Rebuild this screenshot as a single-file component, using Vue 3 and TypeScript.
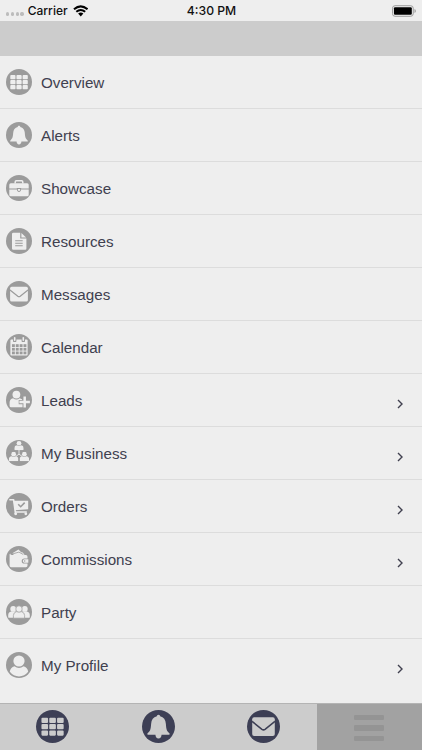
<script setup lang="ts">
interface MenuItem {
  label: string
  icon: string
  expandable?: boolean
}

const items: MenuItem[] = [
  { label: 'Overview', icon: 'grid' },
  { label: 'Alerts', icon: 'bell' },
  { label: 'Showcase', icon: 'case' },
  { label: 'Resources', icon: 'document' },
  { label: 'Messages', icon: 'mail' },
  { label: 'Calendar', icon: 'calendar' },
  { label: 'Leads', icon: 'lead', expandable: true },
  { label: 'My Business', icon: 'team', expandable: true },
  { label: 'Orders', icon: 'cart', expandable: true },
  { label: 'Commissions', icon: 'wallet', expandable: true },
  { label: 'Party', icon: 'party' },
  { label: 'My Profile', icon: 'profile', expandable: true },
]

const tabs: string[] = ['grid', 'bell', 'mail']
const offsets = [0, 1, 2]
</script>

<template>
  <svg class="sprite" aria-hidden="true">
    <symbol id="grid" viewBox="0 0 26 26">
      <circle cx="13" cy="13" r="13" fill="currentColor" />
      <template v-for="r in offsets" :key="r">
        <rect v-for="c in offsets" :key="c" :x="4.3 + c * 6.15" :y="6.1 + r * 5" width="5.2" height="4.1" rx=".8" />
      </template>
    </symbol>
    <symbol id="bell" viewBox="0 0 26 26">
      <circle cx="13" cy="13" r="13" fill="currentColor" />
      <path d="M13 3.7c.8 0 1.3.6 1.3 1.3 2.8.6 4.300 2.800 4.500 5.800.3 4.200.7 5.700 2.600 7.400.8.7.6 1.300-.3 1.300h-5.700c0 1.700-1 2.900-2.400 2.900s-2.400-1.200-2.400-2.900H4.900c-.9 0-1.100-.6-.3-1.300 1.900-1.700 2.300-3.200 2.600-7.400.2-3 1.700-5.200 4.500-5.800 0-.7.5-1.300 1.300-1.300z" />
    </symbol>
    <symbol id="case" viewBox="0 0 26 26">
      <circle cx="13" cy="13" r="13" fill="currentColor" />
      <path d="M9.200 8.500V6.900q0-1.100 1.100-1.100h5.400q1.100 0 1.100 1.100v1.600" fill="none" class="cut" stroke-width="1.500" />
      <path d="M4.800 8.200h16.400q1.500 0 1.500 1.500v3.900h-7.500v-.5h-4.400v.5H3.300V9.700q0-1.500 1.500-1.500z" />
      <path d="M3.300 14.500h7.600c.1 1.600 1 2.400 2.100 2.400s2-.8 2.100-2.400h7.600v5.200q0 1.500-1.500 1.500H4.800q-1.500 0-1.500-1.500z" />
      <path d="M11.900 14h2.200v.9q0 1-1.100 1t-1.100-1z" />
    </symbol>
    <symbol id="document" viewBox="0 0 26 26">
      <circle cx="13" cy="13" r="13" fill="currentColor" />
      <path d="M7.200 4.700h7v5.900h6.200v9.900q0 1.200-1.200 1.200h-12Q6 21.700 6 20.500V5.900q0-1.200 1.200-1.200zM15.400 4.900l4.700 4.500h-4.700z" />
      <path d="M9.200 12.700h7.500M9.200 15.200h7.500M9.200 17.700h7.500" stroke="currentColor" stroke-width="1.100" />
    </symbol>
    <symbol id="mail" viewBox="0 0 26 26">
      <circle cx="13" cy="13" r="13" fill="currentColor" />
      <rect x="4.100" y="5.700" width="17.800" height="14.800" rx="1.500" />
      <path d="M4 9l7.800 6.200q1.200.9 2.400 0L22 9" fill="none" stroke="currentColor" stroke-width="1.200" />
    </symbol>
    <symbol id="calendar" viewBox="0 0 26 26">
      <circle cx="13" cy="13" r="13" fill="currentColor" />
      <path d="M5.300 5.500h15.400q.9 0 .9.900v14.200q0 .9-.9.900H5.300q-.9 0-.9-.9V6.400q0-.9.900-.9z" />
      <g fill="currentColor">
        <rect x="7" y="3.200" width="3.400" height="4.900" rx="1.200" />
        <rect x="15.600" y="3.200" width="3.400" height="4.900" rx="1.200" />
        <template v-for="r in offsets" :key="r">
          <rect v-for="c in 4" :key="c" :x="2.1 + c * 3.85" :y="10.2 + r * 3.65" width="2.900" height="2.800" />
        </template>
      </g>
      <rect x="7.900" y="3" width="1.600" height="4.100" rx=".8" />
      <rect x="16.500" y="3" width="1.600" height="4.100" rx=".8" />
    </symbol>
    <symbol id="lead" viewBox="0 0 26 26">
      <circle cx="13" cy="13" r="13" fill="currentColor" />
      <circle cx="10.400" cy="7.600" r="3.900" />
      <path d="M7.100 11.200q3.300 2.600 6.600 0 2.900.7 3.300 3.100v5.900H5.100q-1.500 0-1.500-1.500v-3.100q0-3.800 3.500-4.400z" />
      <path d="M18.700 8.700v12.600M12.700 15.100h12" stroke="currentColor" stroke-width="4.300" />
      <path d="M18.700 9.600v10.900M13.400 15.100h10.500" class="cut" stroke-width="2.500" />
    </symbol>
    <symbol id="person" viewBox="0 0 10 10">
      <circle cx="5" cy="2.600" r="2.500" />
      <path d="M2.900 4.700q2.100 1.700 4.200 0Q10 5.100 10 7.600v1.600q0 .8-.8.8H.8q-.8 0-.8-.8V7.600q0-2.500 2.900-2.900z" />
    </symbol>
    <symbol id="team" viewBox="0 0 26 26">
      <circle cx="13" cy="13" r="13" fill="currentColor" />
      <path d="M13 10v4.200M10 16.300l3-2.200 3 2.200" fill="none" class="cut" stroke-width=".9" />
      <use href="#person" x="8.300" y=".8" width="9.400" height="9.400" />
      <use href="#person" x="2.900" y="11.700" width="9.500" height="9.500" />
      <use href="#person" x="13.600" y="11.700" width="9.500" height="9.500" />
    </symbol>
    <symbol id="cart" viewBox="0 0 26 26">
      <circle cx="13" cy="13" r="13" fill="currentColor" />
      <path d="M3.900 6.700h3.700l2 14.500" fill="none" class="cut" stroke-width="1.600" stroke-linecap="round" stroke-linejoin="round" />
      <path d="M7.500 7.700h14.700v8.500L8.800 17.200z" />
      <path d="M9 19h11.800" class="cut" stroke-width="1.500" />
      <circle cx="9.700" cy="20.800" r="1.400" /><circle cx="19.800" cy="20.800" r="1.400" />
      <path d="M12.200 11.200l2.500 2.500 4-4.100" fill="none" stroke="currentColor" stroke-width="1.600" />
    </symbol>
    <symbol id="wallet" viewBox="0 0 26 26">
      <circle cx="13" cy="13" r="13" fill="currentColor" />
      <path d="M6.400 7.200l6.100-3.700 2.700 2.700 1.600.2 2 2.800H8z" />
      <path d="M4.200 7.600q-.2 1.400 1.800 1.500h13.900q1.600 0 1.600 1.600v8.900q0 1.600-1.600 1.600H5.200q-1.600 0-1.600-1.600V8.300z" />
      <path d="M5.700 8.200l7.200-2.100 4.400 2.400" fill="none" stroke="currentColor" stroke-width=".8" />
      <path d="M22.800 12.400h-4.500a2.600 2.600 0 0 0 0 5.200h4.500z" fill="currentColor" />
      <path d="M22.300 13.300h-3.800a1.700 1.700 0 0 0 0 3.400h3.800z" />
      <circle cx="18.700" cy="15" r=".7" fill="currentColor" />
    </symbol>
    <symbol id="party" viewBox="0 0 26 26">
      <circle cx="13" cy="13" r="13" fill="currentColor" />
      <circle cx="7.200" cy="9.900" r="2.900" /><circle cx="18.800" cy="9.900" r="2.900" />
      <path d="M5.200 12.500h15.600q3 .7 3 3.700v1.700q0 .9-1 .9H3.200q-1 0-1-.9v-1.700q0-3 3-3.700z" />
      <g stroke="currentColor" stroke-width=".7">
        <path d="M10.400 12.700h5.200q3 .8 3 3.800v2.700H7.400v-2.700q0-3 3-3.800z" />
        <circle cx="13" cy="10" r="3.200" />
      </g>
    </symbol>
    <symbol id="profile" viewBox="0 0 26 26">
      <circle cx="13" cy="13" r="13" fill="currentColor" />
      <circle cx="13" cy="9" r="5.600" />
      <path d="M8.500 14.300q4.500 3.500 9 0 4.100 1.200 4.700 5.500-3.700 4.600-9.200 4.600t-9.200-4.600q.6-4.300 4.700-5.500z" />
    </symbol>
  </svg>

  <div class="screen">
    <header class="status">
      <div class="network">
        <span class="signal"><i v-for="n in 4" :key="n"></i></span>
        <span>Carrier</span>
        <svg class="wifi" viewBox="0 0 16 12">
          <path d="M1 4.200q7-6 14 0M3.400 6.800q4.600-3.800 9.200 0" fill="none" stroke="#000" stroke-width="2.100" />
          <path d="M5.300 8.700q2.700-2.100 5.400 0L8 11.600z" fill="#000" />
        </svg>
      </div>
      <span class="clock">4:30 PM</span>
      <div class="power">
        <svg class="battery" viewBox="0 0 26 12">
          <rect x=".5" y=".5" width="21.600" height="11" rx="2.700" fill="none" stroke="#999" />
          <rect x="2" y="2" width="18.600" height="8" rx="1.200" fill="#000" />
          <path d="M23.400 4q1.400.5 1.400 2t-1.400 2z" fill="#999" />
        </svg>
      </div>
    </header>
    <div class="titlebar"></div>
    <ul class="menu">
      <li v-for="item in items" :key="item.label" class="row">
        <svg class="icon"><use :href="`#${item.icon}`" /></svg>
        <span class="label">{{ item.label }}</span>
        <svg v-if="item.expandable" class="chevron" viewBox="0 0 6 10">
          <path d="M1 1l4 4-4 4" fill="none" stroke="currentColor" stroke-width="1.400" />
        </svg>
      </li>
    </ul>
    <nav class="tabs">
      <div v-for="tab in tabs" :key="tab" class="tab">
        <svg class="tab-icon"><use :href="`#${tab}`" /></svg>
      </div>
      <div class="tab active">
        <div class="burger"><i v-for="n in 3" :key="n"></i></div>
      </div>
    </nav>
  </div>
</template>

<style>
body {
  background: #eee;
}
</style>

<style scoped>
.sprite {
  position: absolute;
  width: 0;
  height: 0;
}
.cut {
  stroke: var(--cut);
}
.screen {
  display: flex;
  flex-direction: column;
  height: 750px;
  overflow: hidden;
  background: #eee;
  color: #40404f;
  font-family: 'Liberation Sans', Arial, sans-serif;
}
.status {
  display: grid;
  grid-template-columns: 1fr auto 1fr;
  align-items: center;
  height: 21px;
  padding: 0 5px 0 6px;
  box-sizing: border-box;
  color: #111;
  font: 500 12px/20px Inter, sans-serif;
}
.clock {
  font-size: 12.200px;
}
.network {
  display: flex;
  align-items: center;
}
.signal {
  display: flex;
  gap: 1.500px;
  margin: 7px 4px 0 0;
}
.signal i {
  width: 3.300px;
  height: 3.300px;
  border-radius: 50%;
  background: #bcbcbc;
}
.wifi {
  width: 15.500px;
  height: 12px;
  margin-left: 5px;
}
.power {
  display: flex;
  justify-content: flex-end;
}
.battery {
  width: 25px;
  height: 12px;
}
.titlebar {
  height: 35px;
  background: #ccc;
}
.menu {
  flex: 1;
  margin: 0;
  padding: 0;
  list-style: none;
}
.row {
  display: flex;
  align-items: center;
  height: 53px;
  padding: 0 19px 0 6px;
  box-sizing: border-box;
  border-bottom: 1px solid #dcdcdc;
}
.row:last-child {
  border-color: transparent;
}
.icon {
  width: 26px;
  height: 26px;
  color: #9b9b9b;
  fill: #eee;
  --cut: #eee;
}
.label {
  margin-left: 9px;
  padding-top: 2px;
  font-size: 15.200px;
  line-height: 20px;
}
.chevron {
  width: 6px;
  height: 10px;
  margin: 7px 0 0 auto;
}
.tabs {
  display: grid;
  grid-template-columns: repeat(4, 1fr);
  height: 47px;
  box-sizing: border-box;
  border-top: 1px solid #b4b4b4;
  background: #ccc;
}
.tab {
  display: flex;
  align-items: center;
  justify-content: center;
  padding-bottom: 1px;
}
.tab-icon {
  width: 33px;
  height: 33px;
  color: #3d3f55;
  fill: #ccc;
  --cut: #ccc;
}
.active {
  background: #a2a2a2;
}
.burger {
  display: grid;
  gap: 5px;
  padding-top: 3px;
}
.burger i {
  width: 30px;
  height: 5.300px;
  border-radius: 1px;
  background: #949494;
}
</style>
